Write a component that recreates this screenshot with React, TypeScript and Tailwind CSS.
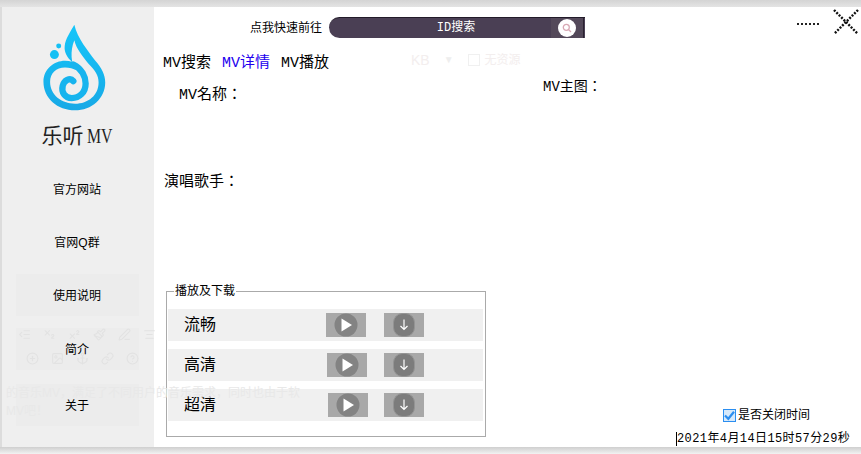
import React from 'react';
import { Anchor, AlignCenter, CirclePlus, CircleHelp, Image, IndentDecrease, Link, Paintbrush, PenLine, Subscript, Superscript } from 'lucide-react';

const mono = 'font-["Liberation_Mono","Noto_Sans_CJK_SC",monospace]';
const label = 'font-["Liberation_Mono","Noto_Sans_CJK_TC",monospace]';
const sans = 'font-["Liberation_Sans","Noto_Sans_CJK_SC",sans-serif]';

const Logo = () => (
  <svg width="70" height="93" viewBox="60 20 210 280">
    <defs>
      <linearGradient id="drop" x1="0" y1="0" x2="0" y2="1">
        <stop offset="0" stopColor="#14c6fa" />
        <stop offset="1" stopColor="#18a9e6" />
      </linearGradient>
    </defs>
    {/* silhouette */}
    <path
      fill="url(#drop)"
      d="M163 28 C172 68 205 108 225 135 C245 158 256 178 256 202 C256 250 215 286 165 286 C112 286 70 250 70 200 C70 162 102 137 135 137 C143 137 150 138 156 140 C140 125 132 110 134 92 C136 70 152 48 163 28 Z"
    />
    {/* gap between ring and spiral */}
    <path
      fill="#efefef"
      d="M163 75 C168 100 190 125 205 145 C225 165 236 180 236 202 C236 240 205 266 165 266 C125 266 90 240 90 200 C90 175 108 157 135 157 C148 157 160 160 170 166 C152 150 150 105 163 75 Z"
    />
    <path
      fill="none"
      stroke="#17b4ee"
      strokeWidth="19"
      strokeLinecap="round"
      d="M160 148 C185 160 197 185 197 205 C197 232 178 249 155 249 C135 249 123 232 128 212 C132 196 150 186 160 198"
    />
    <circle cx="103" cy="118" r="13.5" fill="#14c0f4" />
    <circle cx="116" cy="92" r="7.5" fill="#14c0f4" />
  </svg>
);

const PlayButton = () => (
  <button className="w-10 h-6 bg-[#a8a8a8] flex items-center justify-center">
    <svg width="24" height="24" viewBox="0 0 24 24">
      <circle cx="12" cy="12" r="11.5" fill="#838383" />
      <path d="M7.5 5.5 L18 12 L7.5 18.5 Z" fill="#fff" />
    </svg>
  </button>
);

const DownloadButton = () => (
  <button className="w-10 h-6 bg-[#a8a8a8] flex items-center justify-center">
    <svg width="22" height="24" viewBox="0 0 22 24">
      <rect x="0.5" y="0.5" width="21" height="23" rx="9" fill="#7c7c7c" stroke="#949494" />
      <path d="M11 6.5 V16.5 M7.5 13 L11 16.5 L14.5 13" fill="none" stroke="#fff" strokeWidth="1.2" />
    </svg>
  </button>
);

const rows = [
  { label: '流畅', playGap: 'ml-[108px]', dlGap: 'ml-[18px]' },
  { label: '高清', playGap: 'ml-[109px]', dlGap: 'ml-[17px]' },
  { label: '超清', playGap: 'ml-[110px]', dlGap: 'ml-[16px]' },
];

const navItems = [
  { label: '官方网站', box: 'h-[53px]', bg: '' },
  { label: '官网Q群', box: 'h-[53px]', bg: '' },
  { label: '使用说明', box: 'h-[53px]', bg: 'bg-[#ececec]' },
  { label: '简介', box: 'h-[56px]', bg: 'bg-[#ececec]' },
  { label: '关于', box: 'h-[56px]', bg: 'bg-[#ececec]' },
];

const ghostTop = [IndentDecrease, Subscript, Superscript, Paintbrush, PenLine, AlignCenter];
const ghostBottom = [CirclePlus, Image, Anchor, Link, CircleHelp];

export default function App() {
  return (
    <div className={`relative w-[861px] h-[454px] bg-white overflow-hidden flex flex-col text-black ${sans}`}>
      <div className="h-[7px] shrink-0 bg-gradient-to-b from-[#d4d4d4] to-[#e4e4e4]" />

      <div className="flex flex-1 min-h-0">
        <div className="w-[2px] shrink-0 bg-[#dcdcdc]" />

        {/* Sidebar */}
        <aside className="w-[152px] shrink-0 bg-[#efefef] flex flex-col items-center">
          <div className="mt-[15px] -ml-[6px] h-[93px]">
            <Logo />
          </div>
          <div className='mt-[6px] -ml-[5px] h-[30px] flex text-[21px] leading-[30px] text-[#222] font-["Liberation_Serif","Noto_Sans_CJK_SC",serif]'>
            乐听
            <span className="inline-block ml-[3px] w-[23px] origin-left scale-x-[0.72] text-[22px]">MV</span>
          </div>
          <nav className="mt-[11px] w-full flex flex-col">
            {navItems.map((item) => (
              <div key={item.label} className={`${item.box} flex items-center justify-center`}>
                <span className={`w-[123px] h-[42px] -ml-[2px] pt-[2px] flex items-center justify-center text-xs ${item.bg}`}>
                  {item.label}
                </span>
              </div>
            ))}
          </nav>
        </aside>

        {/* Content */}
        <main className="flex-1 min-w-0 flex flex-col">
          <header className="flex h-[47px] shrink-0">
            <span className="ml-[96px] mt-[12px] h-[18px] leading-[18px] text-xs">点我快速前往</span>
            <div className="ml-[7px] mt-[10px] w-[256px] h-[21px] bg-[#4a3f54] rounded-l-full flex items-center border-t border-[#221b29]">
              <span className={`w-[222px] pl-[32px] text-center text-xs text-white ${mono}`}>ID搜索</span>
              <span className="w-[32px] h-full bg-[#54495a] flex items-center justify-center">
                <span className="w-[18px] h-[18px] rounded-full bg-white flex items-center justify-center">
                  <svg width="10" height="10" viewBox="0 0 10 10" fill="none" stroke="#d8a8b4" strokeWidth="1.3">
                    <circle cx="4.3" cy="4.3" r="3" />
                    <path d="M6.5 6.5 L9 9" />
                  </svg>
                </span>
              </span>
              <span className="w-[1px] h-full bg-[#2a2230]" />
            </div>
            <div className="ml-[212px] mt-[16px] w-[22px] h-0 border-t-2 border-dotted border-[#222]" />
            <svg className="ml-[14px] mt-[2px]" width="26" height="26" viewBox="0 0 26 26">
              <path d="M1 1 L25 25 M25 1 L1 25" stroke="#111" strokeWidth="2.4" strokeDasharray="2 1.4" />
            </svg>
          </header>

          <div className={`flex h-[20px] shrink-0 items-center ml-[9px] text-[15px] ${mono}`}>
            <span className="w-[59px]">MV搜索</span>
            <span className="w-[59px] text-[#2200ee]">MV详情</span>
            <span>MV播放</span>
          </div>

          <div className="flex h-[99px] shrink-0">
            <span className={`ml-[25px] mt-[12px] w-[100px] h-[20px] leading-[20px] text-[15px] ${label}`}>MV名称：</span>
            <span className={`ml-[264px] mt-[3px] h-[20px] leading-[20px] text-sm ${label}`}>MV主图：</span>
          </div>

          <span className={`ml-[10px] h-[20px] shrink-0 leading-[20px] text-[15px] ${label}`}>演唱歌手：</span>

          {/* Group box */}
          <fieldset className="ml-[12px] mt-[91px] w-[320px] h-[153px] shrink-0 border border-[#aaaaaa] px-px">
            <legend className="ml-[6px] px-px text-xs leading-[14px]">播放及下载</legend>
            <div className="mt-[11px] flex flex-col gap-2">
              {rows.map((row) => (
                <div key={row.label} className="w-[315px] h-8 bg-[#f0f0f0] flex items-center">
                  <span className="ml-4 w-[34px] text-base">{row.label}</span>
                  <div className={row.playGap}>
                    <PlayButton />
                  </div>
                  <div className={row.dlGap}>
                    <DownloadButton />
                  </div>
                </div>
              ))}
            </div>
          </fieldset>
        </main>
      </div>

      <div className="h-[7px] shrink-0 bg-gradient-to-b from-[#cfcfcf] to-[#f2f2f2]" />

      {/* Footer controls */}
      <label className="absolute left-[723px] top-[407px] flex items-center gap-[2px] text-xs">
        <span className="w-[13px] h-[13px] border border-[#2b8ef0] bg-[#d6e9fb] flex items-center justify-center">
          <svg width="11" height="11" viewBox="0 0 11 11" fill="none" stroke="#2b8ef0" strokeWidth="2.2">
            <path d="M1 5.5 L4.3 8.8 L10 1.8" />
          </svg>
        </span>
        是否关闭时间
      </label>
      <div className={`absolute left-[676px] top-[432px] h-[14px] leading-[14px] border-l border-black text-xs tracking-[0.4px] ${mono}`}>
        2021年4月14日15时57分29秒
      </div>

      {/* Faint things showing through the translucent window */}
      <div className="absolute left-[411px] top-[50px] flex items-center text-xs text-[#f3eeee] pointer-events-none">
        <span className="text-sm">KB</span>
        <span className="ml-[14px] text-[10px] text-[#eeeeee]">▼</span>
        <span className="ml-[14px] w-[12px] h-[12px] border border-[#f0f0f0]" />
        <span className="ml-[5px]">无资源</span>
      </div>
      <div className="absolute left-[18px] top-[328px] flex gap-[12px] text-[#e2e2e2] pointer-events-none">
        {ghostTop.map((Icon, i) => (
          <Icon key={i} size={13} />
        ))}
      </div>
      <div className="absolute left-[26px] top-[352px] flex gap-[12px] text-[#e2e2e2] pointer-events-none">
        {ghostBottom.map((Icon, i) => (
          <Icon key={i} size={13} />
        ))}
      </div>
      <div className="absolute left-[6px] top-[385px] text-xs text-[#e8e8e8] whitespace-nowrap pointer-events-none">
        的音乐MV，满足了不同用户的音乐需求，同时也由于软
      </div>
      <div className="absolute left-[6px] top-[403px] text-xs text-[#e8e8e8] whitespace-nowrap pointer-events-none">
        MV吧！
      </div>
    </div>
  );
}
